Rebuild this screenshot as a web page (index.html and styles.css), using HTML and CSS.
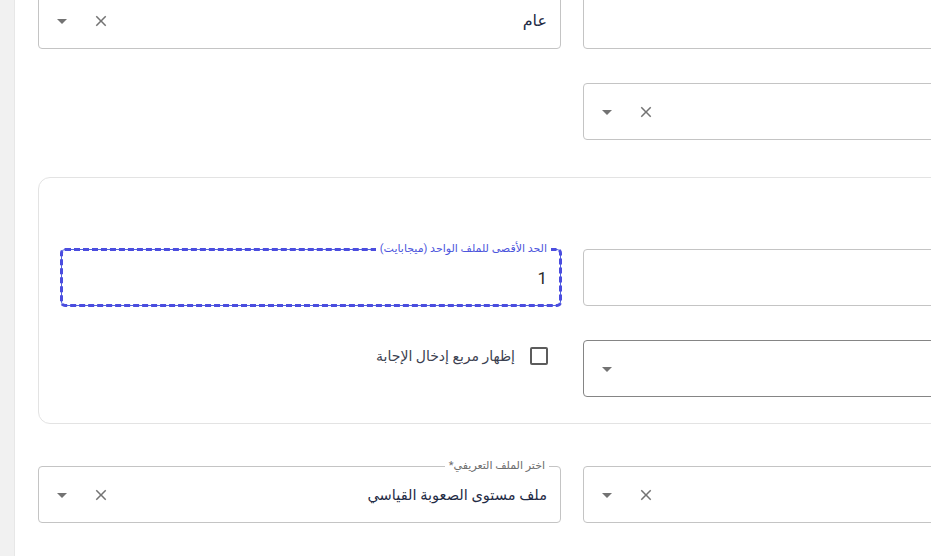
FILE: index.html
```html
<!DOCTYPE html>
<html lang="ar">
<head>
<meta charset="utf-8">
<title>Form</title>
<link rel="stylesheet" href="styles.css">
</head>
<body>
<div class="app">
  <aside class="rail"></aside>
  <main class="main">
    <form class="form" dir="rtl">
      <div class="row">
        <div class="field"></div>
        <div class="field select">
          <span class="value">عام</span>
          <span class="adorn">
            <span class="icon"><svg viewBox="0 0 24 24" width="18" height="18"><path d="M19 6.41 17.59 5 12 10.59 6.41 5 5 6.41 10.59 12 5 17.59 6.41 19 12 13.41 17.59 19 19 17.59 13.41 12z"/></svg></span>
            <span class="icon"><svg viewBox="0 0 24 24" width="24" height="24"><path d="M7 10l5 5 5-5z"/></svg></span>
          </span>
        </div>
      </div>

      <div class="row row-second">
        <div class="field select">
          <span class="adorn">
            <span class="icon"><svg viewBox="0 0 24 24" width="18" height="18"><path d="M19 6.41 17.59 5 12 10.59 6.41 5 5 6.41 10.59 12 5 17.59 6.41 19 12 13.41 17.59 19 19 17.59 13.41 12z"/></svg></span>
            <span class="icon"><svg viewBox="0 0 24 24" width="24" height="24"><path d="M7 10l5 5 5-5z"/></svg></span>
          </span>
        </div>
        <div class="empty"></div>
      </div>

      <section class="card">
        <div class="card-row">
          <div class="field"></div>
          <div class="field focused">
            <label class="notch notch-focus">الحد الأقصى للملف الواحد (ميجابايت)</label>
            <span class="value num">1</span>
          </div>
        </div>
        <div class="card-row card-row-second">
          <div class="field select strong">
            <span class="adorn">
              <span class="icon"><svg viewBox="0 0 24 24" width="24" height="24"><path d="M7 10l5 5 5-5z"/></svg></span>
            </span>
          </div>
          <label class="check">
            <span class="box"></span>
            <span class="check-text">إظهار مربع إدخال الإجابة</span>
          </label>
        </div>
      </section>

      <div class="row row-last">
        <div class="field select">
          <span class="adorn">
            <span class="icon"><svg viewBox="0 0 24 24" width="18" height="18"><path d="M19 6.41 17.59 5 12 10.59 6.41 5 5 6.41 10.59 12 5 17.59 6.41 19 12 13.41 17.59 19 19 17.59 13.41 12z"/></svg></span>
            <span class="icon"><svg viewBox="0 0 24 24" width="24" height="24"><path d="M7 10l5 5 5-5z"/></svg></span>
          </span>
        </div>
        <div class="field select">
          <label class="notch">اختر الملف التعريفي*</label>
          <span class="value long">ملف مستوى الصعوبة القياسي</span>
          <span class="adorn">
            <span class="icon"><svg viewBox="0 0 24 24" width="18" height="18"><path d="M19 6.41 17.59 5 12 10.59 6.41 5 5 6.41 10.59 12 5 17.59 6.41 19 12 13.41 17.59 19 19 17.59 13.41 12z"/></svg></span>
            <span class="icon"><svg viewBox="0 0 24 24" width="24" height="24"><path d="M7 10l5 5 5-5z"/></svg></span>
          </span>
        </div>
      </div>
    </form>
  </main>
</div>
</body>
</html>
```

FILE: styles.css
```css
html, body {
  margin: 0;
  padding: 0;
  height: 556px;
  overflow: hidden;
  background: #ffffff;
  font-family: Roboto, "DejaVu Sans", sans-serif;
}

.app {
  display: flex;
  height: 556px;
}

.rail {
  flex: 0 0 14px;
  background: #f1f1f1;
  border-right: 1px solid #e7e7e7;
}

.main {
  padding-left: 23px;
}

.form {
  width: 1068px;
  margin-top: -8px;
}

.row {
  display: grid;
  grid-template-columns: 523px 523px;
  column-gap: 22px;
}

.row-second { margin-top: 34px; }
.row-last { margin-top: 42px; }

.field {
  position: relative;
  box-sizing: border-box;
  height: 57px;
  border: 1px solid #c4c4c4;
  border-radius: 4px;
  display: flex;
  align-items: center;
  padding-inline-start: 13px;
  padding-inline-end: 11px;
  background: #fff;
}

.field.strong { border-color: #858585; }

.field.focused {
  border-color: #4f63dc;
  outline: 3px dashed #4b4ddf;
  outline-offset: -2px;
}

.value {
  font-size: 16px;
  color: #1f2b45;
  white-space: nowrap;
}

.value.long { font-size: 14.6px; }

.value.num {
  font-size: 17px;
  color: #2a2a2a;
}

.adorn {
  margin-inline-start: auto;
  display: flex;
  align-items: center;
  gap: 15px;
}

.icon {
  width: 24px;
  height: 24px;
  display: flex;
  align-items: center;
  justify-content: center;
}

.icon svg { fill: #737373; }

.notch {
  position: absolute;
  top: -9px;
  right: 11px;
  padding: 0 4px;
  background: #fff;
  font-size: 11px;
  line-height: 16px;
  color: #6d6d6d;
  white-space: nowrap;
}

.notch-focus {
  color: #4c55dc;
  right: 9px;
}

.card {
  margin-top: 37px;
  border: 1px solid #e3e3e3;
  border-radius: 12px;
  padding: 71px 22px 26px;
}

.card-row {
  display: grid;
  grid-template-columns: 500px 500px;
  column-gap: 22px;
}

.card-row-second { margin-top: 34px; }

.check {
  align-self: start;
  display: flex;
  align-items: center;
  gap: 15px;
  padding-top: 7px;
  padding-inline-start: 13px;
}

.box {
  width: 18px;
  height: 18px;
  box-sizing: border-box;
  border: 2px solid #5c5c5c;
  border-radius: 2px;
}

.check-text {
  font-size: 14px;
  color: #3b4150;
}
```
